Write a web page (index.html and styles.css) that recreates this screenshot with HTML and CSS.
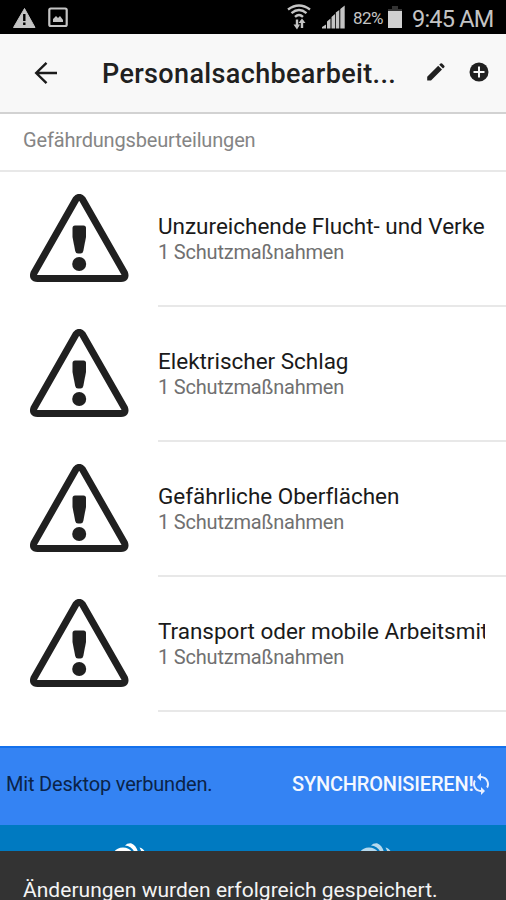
FILE: index.html
```html
<!DOCTYPE html>
<html lang="de">
<head>
<meta charset="utf-8">
<title>Gefährdungsbeurteilungen</title>
<link rel="stylesheet" href="styles.css">
</head>
<body>
<svg class="defs" aria-hidden="true">
  <symbol id="warning" viewBox="0 0 99 89">
    <path d="M46 5.200Q49.200 1.500 52.400 5.200L94.500 79Q96.500 84.500 91 84.500H7.500Q2 84.500 4 79Z" fill="none" stroke="#202020" stroke-width="7" stroke-linejoin="round"/>
    <path d="M42.500 34Q42.500 31.500 45 31.500H53.500Q56 31.500 56 34V43L53.300 57Q52.800 59.500 50.500 59.500H48Q45.700 59.500 45.200 57L42.500 43Z" fill="#202020"/>
    <circle cx="49.200" cy="70" r="7" fill="#202020"/>
  </symbol>
  <symbol id="people" viewBox="0 0 32 10">
    <path d="M0 10Q3 5.500 9 5.500Q15 5.500 18 10ZM11 3.500Q13 1 17 1.200Q22 3 24 10H20.500Q17 3.800 11 3.500ZM25.500 5.500Q29 6 31 10H27.500Q26.500 7 25.500 5.500Z" fill="currentColor"/>
  </symbol>
</svg>
<div class="screen">
  <div class="status">
    <svg class="status-left" width="76" height="34" viewBox="0 0 76 34">
      <path d="M24.500 8.500L35 27.500H13.500Z" fill="#c4c4c4" stroke="#c4c4c4" stroke-linejoin="round"/>
      <path d="M24.300 14V21M24.300 22.500V25" stroke="#000" stroke-width="2.400"/>
      <rect x="49.300" y="8.500" width="17.400" height="17.500" rx="1.500" fill="none" stroke="#c4c4c4" stroke-width="2.200"/>
      <path d="M53 22V19L56 16L58 18L60 16L63 20V22Z" fill="#c4c4c4"/>
    </svg>
    <svg class="status-icons" width="62" height="34" viewBox="286 0 62 34">
      <g fill="none" stroke="#c4c4c4" stroke-width="2.400">
        <path d="M288 9.500Q299 1.500 310 9.500M291.500 13.200Q299 7 306.500 13.200M295 16.800Q299 13 303 16.800"/>
        <path d="M297 27V19.500M302 20V28"/>
      </g>
      <path d="M293.500 24.500L297 29.500L300 24.500ZM298.500 23L302 18.500L305.500 23Z" fill="#c4c4c4"/>
      <path d="M322 28.500V27L326 24.500V28.500ZM327 28.500V21.500L330.500 18.500V28.500ZM331.500 28.500V17L335 14V28.500ZM335.800 28.500V12.500L339.300 10V28.500ZM340.300 28.500V9L344.700 5.500V28.500Z" fill="#c4c4c4"/>
    </svg>
    <span class="percent">82%</span>
    <svg class="battery" width="16" height="34" viewBox="0 0 16 34"><path d="M5 6H11V9H15V12H1V9H5Z" fill="#333"/><path d="M1 11H15V28H1Z" fill="#d0d0d0"/></svg>
    <span class="clock">9:45 AM</span>
  </div>
  <header class="toolbar">
    <svg class="back" width="24" height="24" viewBox="0 0 24 24"><path d="M23 12H2.500M12.500 1.800L2.200 12L12.500 22.200" fill="none" stroke="#1b1b1b" stroke-width="2.400"/></svg>
    <h1 class="title">Personalsachbearbeit...</h1>
    <svg class="edit" width="20" height="20" viewBox="0 0 20 20"><path d="M1.200 18.500V14.800L12.200 3.800L16 7.600L5 18.500ZM13.200 2.800L14.500 1.500Q15.300.8 16.100 1.500L18.300 3.700Q19 4.500 18.300 5.300L17 6.600Z" fill="#202020"/></svg>
    <svg class="add" width="20" height="20" viewBox="0 0 20 20"><circle cx="10" cy="10" r="9.500" fill="#202020"/><path d="M10 4.500V15.500M4.500 10H15.500" stroke="#f8f8f8" stroke-width="2"/></svg>
  </header>
  <main class="content">
    <h2 class="section"><span>Gefährdungsbeurteilungen</span></h2>
    <div class="item"><svg class="thumb"><use href="#warning"/></svg><div class="body"><div class="name">Unzureichende Flucht- und Verke</div><div class="sub">1 Schutzmaßnahmen</div></div></div>
    <div class="item"><svg class="thumb"><use href="#warning"/></svg><div class="body"><div class="name">Elektrischer Schlag</div><div class="sub">1 Schutzmaßnahmen</div></div></div>
    <div class="item"><svg class="thumb"><use href="#warning"/></svg><div class="body"><div class="name">Gefährliche Oberflächen</div><div class="sub">1 Schutzmaßnahmen</div></div></div>
    <div class="item"><svg class="thumb"><use href="#warning"/></svg><div class="body"><div class="name">Transport oder mobile Arbeitsmit</div><div class="sub">1 Schutzmaßnahmen</div></div></div>
  </main>
  <div class="sync">
    <span class="connected">Mit Desktop verbunden.</span>
    <span class="action">SYNCHRONISIEREN!</span>
    <svg class="refresh" width="20" height="22" viewBox="2 1 20 22"><path d="M12 4V1L8 5l4 4V6c3.310 0 6 2.690 6 6 0 1.010-.25 1.970-.7 2.800l1.460 1.460C19.540 15.030 20 13.570 20 12c0-4.420-3.580-8-8-8zm0 14c-3.310 0-6-2.690-6-6 0-1.010.25-1.970.7-2.800L5.240 7.740C4.460 8.970 4 10.430 4 12c0 4.420 3.580 8 8 8v3l4-4-4-4v3z" fill="#e8f0ff"/></svg>
  </div>
  <nav class="tabs">
    <div class="tab active"><svg width="32" height="10"><use href="#people"/></svg></div>
    <div class="tab"><svg width="32" height="10"><use href="#people"/></svg></div>
  </nav>
  <div class="toast"><span>Änderungen wurden erfolgreich gespeichert.</span></div>
</div>
</body>
</html>
```
FILE: styles.css
```css
* { box-sizing: border-box; }
body { margin: 0; font-family: Roboto, "Liberation Sans", sans-serif; background: #fff; }
h1, h2 { margin: 0; font-weight: 400; }
svg { display: block; flex: none; }
.defs { position: absolute; width: 0; height: 0; }
.screen { display: flex; flex-direction: column; width: 506px; height: 900px; overflow: hidden; white-space: nowrap; }
.status { display: flex; align-items: center; height: 34px; flex: none; background: #000; color: #c4c4c4; }
.status-icons { margin-left: 210px; }
.percent { width: 35px; margin-left: 5px; font-size: 17px; line-height: 34px; padding-top: 2px; letter-spacing: -.6px; }
.battery { margin-left: -1px; }
.clock { margin-left: 9px; font-size: 23.5px; line-height: 34px; padding-top: 3px; letter-spacing: -.8px; }
.toolbar { display: flex; align-items: center; height: 80px; flex: none; padding-left: 34px; background: #f8f8f8; border-bottom: 2px solid #d2d2d2; }
.title { width: 324px; margin-left: 44px; padding-top: 2px; font-size: 27px; line-height: 36px; font-weight: 500; letter-spacing: .35px; color: #202020; }
.edit { margin-top: -3px; }
.add { margin-left: 23px; margin-top: -3px; }
.content { height: 632px; flex: none; overflow: hidden; }
.section { height: 58px; padding: 14px 0 0 23px; border-bottom: 2px solid #e8e8e8; font-size: 20px; line-height: 24px; letter-spacing: -.17px; color: #858585; }
.item { display: flex; height: 135px; padding-left: 30px; }
.thumb { width: 99px; height: 89px; margin-top: 22px; }
.body { flex: 1; margin-left: 29px; padding-top: 40px; border-bottom: 2px solid #e8e8e8; }
.name { width: 327px; overflow: hidden; font-size: 22.5px; line-height: 28px; letter-spacing: -.02px; color: #1a1a1a; }
.sub { font-size: 20px; line-height: 24px; letter-spacing: -.2px; color: #707070; }
.sync { display: flex; align-items: center; height: 79px; flex: none; padding: 0 0 5px 6px; background: #3483f3; border-top: 2px solid #1471ec; }
.connected { width: 286px; font-size: 20px; letter-spacing: -.18px; color: #0b2348; }
.action { width: 177px; font-size: 20px; font-weight: 500; letter-spacing: -.18px; color: #f4f8ff; }
.refresh { margin-left: 2px; margin-top: -1px; }
.tabs { display: flex; height: 26px; flex: none; padding: 17px 0 0 114px; background: #007ac1; }
.tab { flex: none; width: 246px; color: #b5d9ee; }
.active { color: #fff; }
.toast { height: 49px; flex: none; padding: 25px 0 0 23px; background: #333; color: #f4f4f4; font-size: 21px; line-height: 28px; letter-spacing: .03px; }
```
